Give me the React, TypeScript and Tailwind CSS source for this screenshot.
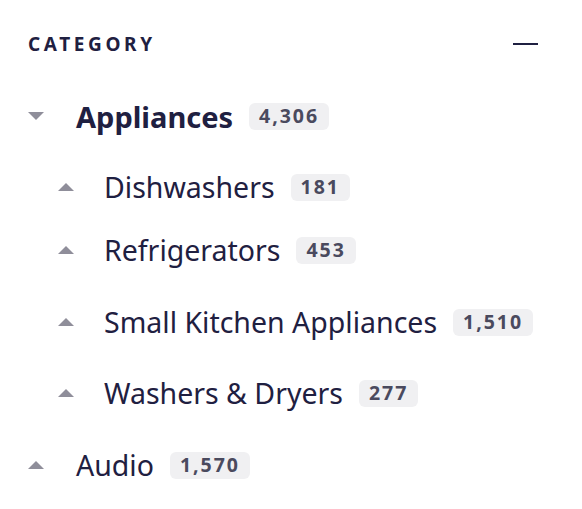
type Cat = {
  name: string;
  count: string;
  depth: number;
  open?: boolean;
  gap: string;
};

const cats: Cat[] = [
  { name: 'Appliances', count: '4,306', depth: 0, open: true, gap: 'mt-[40px]' },
  { name: 'Dishwashers', count: '181', depth: 1, gap: 'mt-[31px]' },
  { name: 'Refrigerators', count: '453', depth: 1, gap: 'mt-[23px]' },
  { name: 'Small Kitchen Appliances', count: '1,510', depth: 1, gap: 'mt-[32px]' },
  { name: 'Washers & Dryers', count: '277', depth: 1, gap: 'mt-[31px]' },
  { name: 'Audio', count: '1,570', depth: 0, gap: 'mt-[32px]' },
];

function Caret({ open }: { open?: boolean }) {
  return (
    <svg width="16" height="8" viewBox="0 0 16 8" className="shrink-0 text-[#8f8e9a]">
      {open ? <path d="M0 0h16L8 8Z" fill="currentColor" /> : <path d="M0 8h16L8 0Z" fill="currentColor" />}
    </svg>
  );
}

export default function App() {
  return (
    <div className="w-[582px] h-[509px] bg-white pl-[28px] pr-[44px] pt-[32px] font-['Noto_Sans',sans-serif] text-[#1f2041]">
      {/* header */}
      <div className="flex items-center justify-between h-6">
        <span className="text-[19px] font-bold tracking-[0.19em] leading-none">CATEGORY</span>
        <div className="w-[25px] h-[2px] bg-[#1f2041]" />
      </div>

      {cats.map((c) => (
        <div key={c.name} className={`${c.gap} flex items-center h-10 ${c.depth ? 'pl-[30px]' : ''}`}>
          <Caret open={c.open} />
          <span
            className={
              'leading-none ' +
              (c.open ? 'ml-[32px] text-[29px] font-bold' : c.depth ? 'ml-[30px] text-[28.5px] font-normal' : 'ml-[32px] text-[28.5px] font-normal')
            }
          >
            {c.name}
          </span>
          <span className="ml-4 rounded-md bg-[#f0f0f2] px-[10px] h-[27px] flex items-center text-[19.5px] font-bold tracking-[0.1em] text-[#4a4a5e]">
            {c.count}
          </span>
        </div>
      ))}
    </div>
  );
}
